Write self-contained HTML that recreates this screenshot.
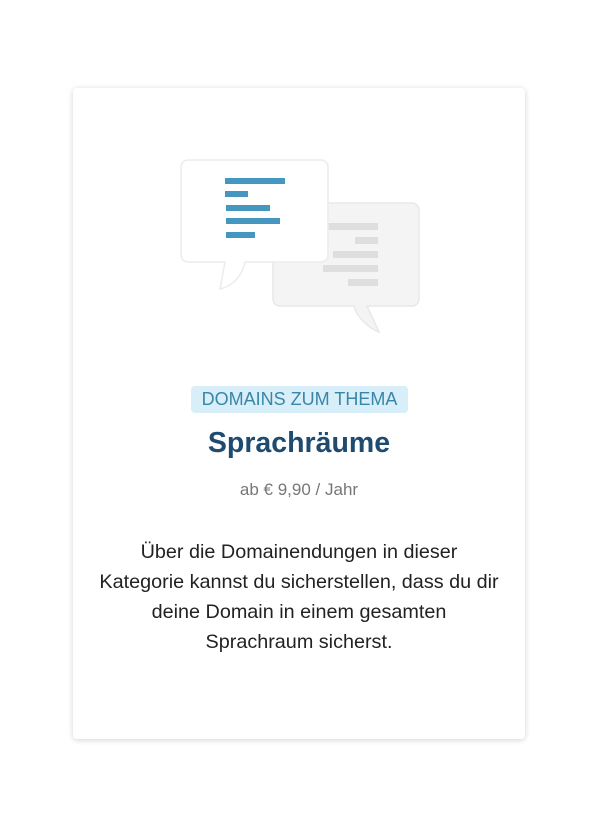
<!DOCTYPE html>
<html><head><meta charset="utf-8"><style>
body{margin:0;width:600px;height:830px;background:#fff;font-family:"Liberation Sans",sans-serif;position:relative}
.card{position:absolute;left:73px;top:88px;width:452px;height:651px;background:#fff;border-radius:4px;box-shadow:0 1px 6px rgba(0,0,0,.18)}
svg{position:absolute;left:0;top:0}
.badge{position:absolute;left:118px;top:298px;width:217px;height:27px;background:#d8eef8;border-radius:4px;color:#3a86a8;font-size:18px;line-height:27px;text-align:center;white-space:nowrap}
.t{position:absolute;left:0;width:452px;text-align:center;white-space:nowrap}
</style></head><body>
<div class="card">
<svg width="452" height="300" viewBox="73 88 452 300">
<path d="M280 203h132a7 7 0 0 1 7 7v89a7 7 0 0 1-7 7h-45l12 26c-10-4-22-14-25-26h-74a7 7 0 0 1-7-7v-89a7 7 0 0 1 7-7z" fill="#f4f4f4" stroke="#e8e8e8" stroke-width="1.5"/>
<g fill="#dedede"><rect x="327" y="223" width="51" height="7"/><rect x="355" y="237" width="23" height="7"/><rect x="333" y="251" width="45" height="7"/><rect x="323" y="265" width="55" height="7"/><rect x="348" y="279" width="30" height="7"/></g>
<path d="M188 160h133a7 7 0 0 1 7 7v88a7 7 0 0 1-7 7h-76c-3 14-12 24-25 27l5-27h-37a7 7 0 0 1-7-7v-88a7 7 0 0 1 7-7z" fill="#fff" stroke="#ececec" stroke-width="1.5"/>
<g fill="#4597bf"><rect x="225" y="178" width="60" height="6"/><rect x="225" y="191" width="23" height="6"/><rect x="226" y="205" width="44" height="6"/><rect x="226" y="218" width="54" height="6"/><rect x="226" y="232" width="29" height="6"/></g>
</svg>
<div class="badge">DOMAINS ZUM THEMA</div>
<div class="t" style="top:339px;font-size:28.5px;font-weight:bold;color:#1f4b70">Sprachräume</div>
<div class="t" style="top:392px;font-size:17px;color:#777">ab € 9,90 / Jahr</div>
<div class="t" style="top:449px;font-size:19.8px;line-height:30px;color:#222">Über die Domainendungen in dieser<br>Kategorie kannst du sicherstellen, dass du dir<br>deine Domain in einem gesamten<br>Sprachraum sicherst.</div>
</div>
</body></html>
